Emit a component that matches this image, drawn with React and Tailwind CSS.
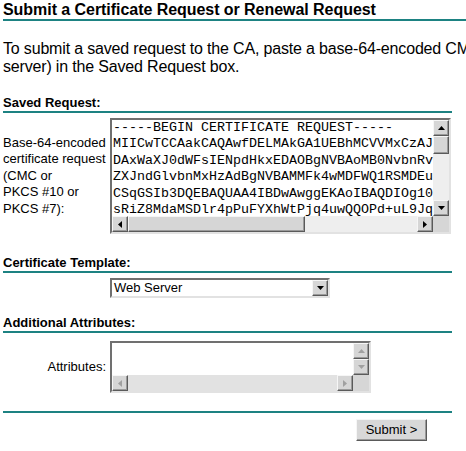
import React from 'react';

const requestLines = [
  '-----BEGIN CERTIFICATE REQUEST-----',
  'MIICwTCCAakCAQAwfDELMAkGA1UEBhMCVVMxCzAJ',
  'DAxWaXJ0dWFsIENpdHkxEDAOBgNVBAoMB0NvbnRv',
  'ZXJndGlvbnMxHzAdBgNVBAMMFk4wMDFWQ1RSMDEu',
  'CSqGSIb3DQEBAQUAA4IBDwAwggEKAoIBAQDIOg10',
  'sRiZ8MdaMSDlr4pPuFYXhWtPjq4uwQQOPd+uL9Jq',
];

// little arrow glyph for the classic scrollbar buttons
const Arrow = ({ dir, disabled }) => {
  const fill = disabled ? '#a0a0a0' : '#000000';
  if (dir === 'up')
    return (
      <svg width="7" height="4" viewBox="0 0 7 4">
        <polygon points="0,4 3.5,0 7,4" fill={fill} />
      </svg>
    );
  if (dir === 'down')
    return (
      <svg width="7" height="4" viewBox="0 0 7 4">
        <polygon points="0,0 7,0 3.5,4" fill={fill} />
      </svg>
    );
  if (dir === 'left')
    return (
      <svg width="4" height="7" viewBox="0 0 4 7">
        <polygon points="4,0 4,7 0,3.5" fill={fill} />
      </svg>
    );
  return (
    <svg width="4" height="7" viewBox="0 0 4 7">
      <polygon points="0,0 4,3.5 0,7" fill={fill} />
    </svg>
  );
};

const ScrollButton = ({ dir, disabled }) => (
  <div className="w-[16px] h-[16px] shrink-0 flex items-center justify-center bg-[#d6d6d6] border border-t-[#f6f6f6] border-l-[#f6f6f6] border-b-[#5a5a5a] border-r-[#5a5a5a] shadow-[inset_-1px_-1px_0_#9a9a9a]">
    <Arrow dir={dir} disabled={disabled} />
  </div>
);

const Thumb = ({ className }) => (
  <div className={`shrink-0 bg-[#d6d6d6] border border-t-[#f6f6f6] border-l-[#f6f6f6] border-b-[#5a5a5a] border-r-[#5a5a5a] shadow-[inset_-1px_-1px_0_#9a9a9a] ${className}`} />
);

const SectionHeader = ({ children, className = '' }) => (
  <div className={`w-[449px] text-[13px] font-bold leading-[16px] border-b-2 border-[#1d8282] ${className}`}>
    {children}
  </div>
);

const App = () => {
  return (
    <div className="w-full h-[451px] overflow-hidden bg-white pl-[3px] text-black font-['Liberation_Sans',Arial,sans-serif]">
      <h1 className="text-[16px] font-bold leading-[19px] tracking-[-0.05px] border-b-2 border-[#1d8282]">
        Submit a Certificate Request or Renewal Request
      </h1>

      <p className="mt-[19px] text-[16px] leading-[18px] tracking-[-0.17px] whitespace-nowrap">
        To submit a saved request to the CA, paste a base-64-encoded CMC or PKCS #10 certificate request or PKCS #7
        renewal request generated by an external source (such as a Web
        <br />
        server) in the Saved Request box.
      </p>

      {/* Saved request */}
      <SectionHeader className="mt-[19px]">Saved Request:</SectionHeader>
      <div className="mt-[5px] flex items-center">
        <div className="w-[105px] text-[13px] leading-[16.5px]">
          Base-64-encoded
          <br />
          certificate request
          <br />
          (CMC or
          <br />
          PKCS #10 or
          <br />
          PKCS #7):
        </div>
        <div className="ml-[2px] w-[341px] h-[116px] flex flex-col bg-white border-2 border-t-[#707070] border-l-[#707070] border-b-[#e2e2e2] border-r-[#e2e2e2]">
          <div className="flex h-[96px]">
            <pre className="flex-1 overflow-hidden pl-[1px] font-['Liberation_Mono','Courier_New',monospace] text-[13.33px] leading-[16.4px] text-black">
              {requestLines.join('\n')}
            </pre>
            <div className="w-[16px] flex flex-col">
              <ScrollButton dir="up" />
              <Thumb className="h-[18px]" />
              <div className="flex-1 bg-[#eeeeee]" />
              <ScrollButton dir="down" />
            </div>
          </div>
          <div className="flex h-[16px]">
            <ScrollButton dir="left" />
            <Thumb className="w-[177px]" />
            <div className="flex-1 bg-[#eeeeee]" />
            <ScrollButton dir="right" />
            <div className="w-[16px] bg-[#d6d6d6]" />
          </div>
        </div>
      </div>

      {/* Template */}
      <SectionHeader className="mt-[21px]">Certificate Template:</SectionHeader>
      <div className="mt-[5px] pl-[107px]">
        <div className="w-[220px] h-[20px] flex items-center bg-white border-2 border-t-[#707070] border-l-[#707070] border-b-[#e2e2e2] border-r-[#e2e2e2]">
          <span className="flex-1 pl-[2px] text-[13px] leading-[16px]">Web Server</span>
          <ScrollButton dir="down" />
        </div>
      </div>

      {/* Attributes */}
      <SectionHeader className="mt-[17px]">Additional Attributes:</SectionHeader>
      <div className="mt-[8px] flex items-center">
        <div className="w-[105px] pr-[2px] text-right text-[13px] leading-[16px]">Attributes:</div>
        <div className="ml-[2px] w-[261px] h-[52px] flex flex-col bg-white border-2 border-t-[#707070] border-l-[#707070] border-b-[#e2e2e2] border-r-[#e2e2e2]">
          <div className="flex h-[32px]">
            <div className="flex-1" />
            <div className="w-[16px] flex flex-col">
              <ScrollButton dir="up" disabled />
              <ScrollButton dir="down" disabled />
            </div>
          </div>
          <div className="flex h-[16px]">
            <ScrollButton dir="left" disabled />
            <div className="flex-1 bg-[#e2e2e2]" />
            <ScrollButton dir="right" disabled />
            <div className="w-[16px] bg-[#d6d6d6]" />
          </div>
        </div>
      </div>

      <div className="mt-[18px] w-[449px] h-[2px] bg-[#1d8282]" />

      <div className="mt-[4px] pl-[353px]">
        <button className="w-[71px] h-[22px] text-[13px] leading-[16px] bg-[#d8d8d8] border border-t-[#f6f6f6] border-l-[#f6f6f6] border-b-[#5a5a5a] border-r-[#5a5a5a] shadow-[inset_-1px_-1px_0_#9a9a9a]">
          Submit &gt;
        </button>
      </div>
    </div>
  );
};

export default App;
